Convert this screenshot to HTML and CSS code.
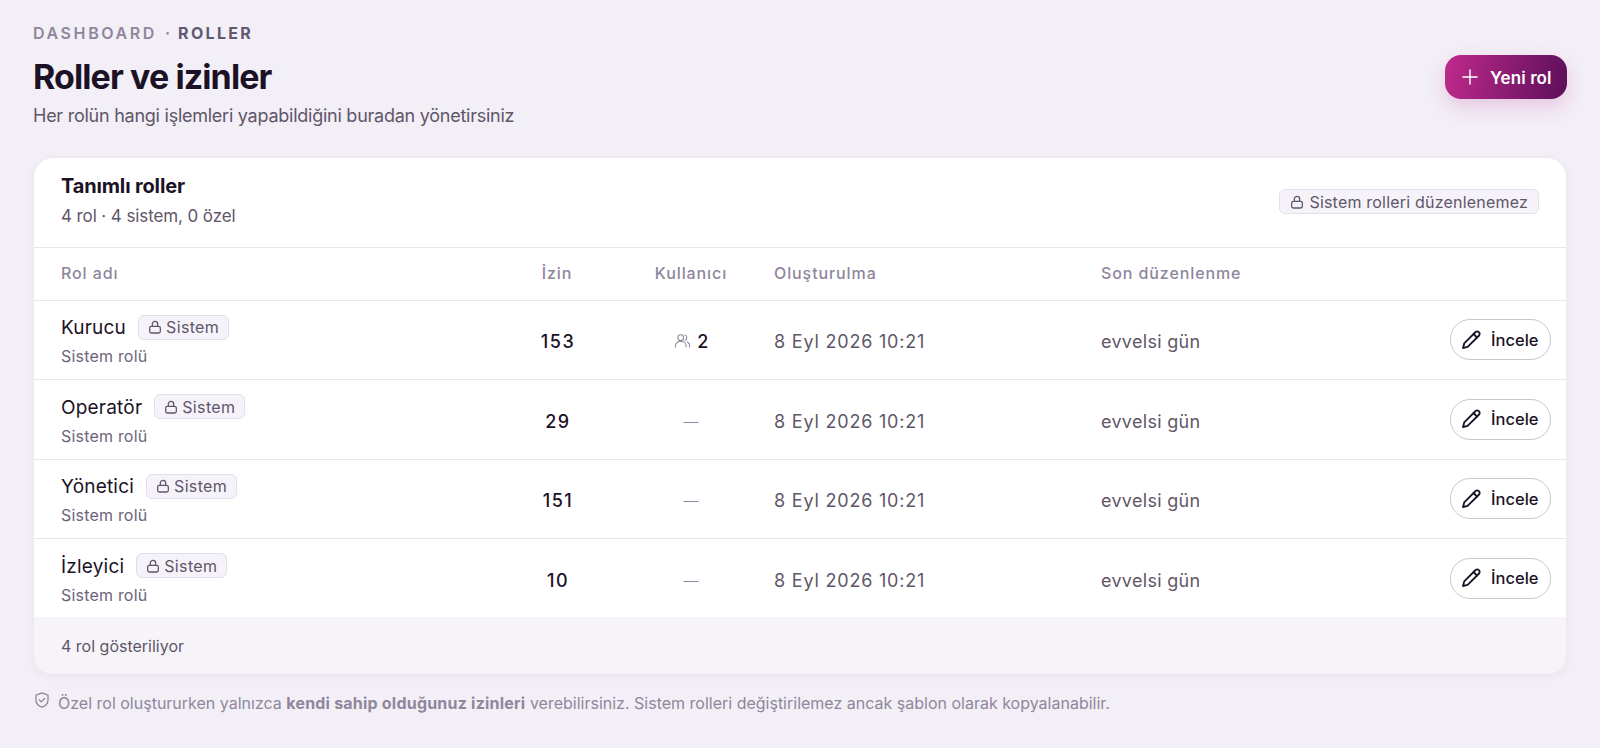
FILE: index.html
```html
<!DOCTYPE html>
<html lang="tr">
<head>
  <meta charset="UTF-8">
  <title>Roller ve izinler</title>
  <link rel="stylesheet" href="styles.css">
</head>
<body>

<svg class="sprite" width="0" height="0">
  <symbol id="i-lock" viewBox="0 0 24 24">
    <rect x="4" y="11" width="16" height="10" rx="2.5"/>
    <path d="M8 11V7.500a4 4 0 0 1 8 0V11"/>
  </symbol>
  <symbol id="i-pencil" viewBox="0 0 24 24">
    <path d="M4 20l1.200-4.600L16.600 4a2.500 2.500 0 0 1 3.500 3.500L8.600 18.900z"/>
    <path d="M14.500 6l3.500 3.500"/>
  </symbol>
</svg>

<main class="page">
  <div class="crumbs"><span>DASHBOARD</span><i>·</i><b>ROLLER</b></div>

  <header class="head">
    <div>
      <h1>Roller ve izinler</h1>
      <p class="sub">Her rolün hangi işlemleri yapabildiğini buradan yönetirsiniz</p>
    </div>
    <button class="btn-new">
      <svg viewBox="0 0 24 24"><path d="M12 3.500v17M3.500 12h17"/></svg>
      Yeni rol
    </button>
  </header>

  <section class="card">
    <div class="card-head">
      <div>
        <h2>Tanımlı roller</h2>
        <p class="count">4 rol · 4 sistem, 0 özel</p>
      </div>
      <span class="tag tag-wide"><svg class="lock"><use href="#i-lock"/></svg>Sistem rolleri düzenlenemez</span>
    </div>

    <table class="roles">
      <colgroup>
        <col class="c-name"><col class="c-perm"><col class="c-user"><col class="c-date"><col class="c-edit"><col>
      </colgroup>
      <thead>
        <tr>
          <th>Rol adı</th>
          <th class="mid">İzin</th>
          <th class="mid">Kullanıcı</th>
          <th>Oluşturulma</th>
          <th>Son düzenlenme</th>
          <th></th>
        </tr>
      </thead>
      <tbody>
        <tr>
          <td class="role">
            <div class="name">Kurucu <span class="tag"><svg class="lock"><use href="#i-lock"/></svg>Sistem</span></div>
            <div class="desc">Sistem rolü</div>
          </td>
          <td class="mid num">153</td>
          <td class="mid users">
            <svg class="people" viewBox="0 0 24 24"><circle cx="9.500" cy="8" r="4"/><path d="M2 21v-1.500a6 6 0 0 1 6-6h3a6 6 0 0 1 6 6V21"/><path d="M15.500 4.300a4 4 0 0 1 0 7.500M19 14a6 6 0 0 1 3 5.500V21"/></svg>
            2
          </td>
          <td class="soft date">8 Eyl 2026 10:21</td>
          <td class="soft">evvelsi gün</td>
          <td class="act"><button class="btn-view"><svg><use href="#i-pencil"/></svg>İncele</button></td>
        </tr>
        <tr>
          <td class="role">
            <div class="name">Operatör <span class="tag"><svg class="lock"><use href="#i-lock"/></svg>Sistem</span></div>
            <div class="desc">Sistem rolü</div>
          </td>
          <td class="mid num">29</td>
          <td class="mid dash">—</td>
          <td class="soft date">8 Eyl 2026 10:21</td>
          <td class="soft">evvelsi gün</td>
          <td class="act"><button class="btn-view"><svg><use href="#i-pencil"/></svg>İncele</button></td>
        </tr>
        <tr>
          <td class="role">
            <div class="name">Yönetici <span class="tag"><svg class="lock"><use href="#i-lock"/></svg>Sistem</span></div>
            <div class="desc">Sistem rolü</div>
          </td>
          <td class="mid num">151</td>
          <td class="mid dash">—</td>
          <td class="soft date">8 Eyl 2026 10:21</td>
          <td class="soft">evvelsi gün</td>
          <td class="act"><button class="btn-view"><svg><use href="#i-pencil"/></svg>İncele</button></td>
        </tr>
        <tr>
          <td class="role">
            <div class="name">İzleyici <span class="tag"><svg class="lock"><use href="#i-lock"/></svg>Sistem</span></div>
            <div class="desc">Sistem rolü</div>
          </td>
          <td class="mid num">10</td>
          <td class="mid dash">—</td>
          <td class="soft date">8 Eyl 2026 10:21</td>
          <td class="soft">evvelsi gün</td>
          <td class="act"><button class="btn-view"><svg><use href="#i-pencil"/></svg>İncele</button></td>
        </tr>
      </tbody>
    </table>

    <div class="card-foot">4 rol gösteriliyor</div>
  </section>

  <p class="note">
    <svg viewBox="0 0 24 24"><path d="M12 2.500l8 3v6c0 5-3.400 8.500-8 10-4.600-1.500-8-5-8-10v-6z"/><path d="M8.500 12l2.500 2.500 4.500-4.500"/></svg>
    <span>Özel rol oluştururken yalnızca <b>kendi sahip olduğunuz izinleri</b> verebilirsiniz. Sistem rolleri değiştirilemez ancak şablon olarak kopyalanabilir.</span>
  </p>
</main>

</body>
</html>
```

FILE: styles.css
```css
* {
  box-sizing: border-box;
}
body {
  margin: 0;
  height: 748px;
  overflow: hidden;
  font-family: Inter, 'Noto Sans', sans-serif;
  background: #f3eff6;
  color: #1c1226;
}
svg {
  fill: none;
  stroke: currentColor;
  stroke-linecap: round;
  stroke-linejoin: round;
}
.sprite {
  position: absolute;
}
.page {
  padding: 23px 33px 0;
}
.crumbs {
  display: flex;
  gap: 8px;
  font-size: 16px;
  line-height: 20px;
  font-weight: 600;
  letter-spacing: 2.6px;
  color: #8f869d;
}
.crumbs i {
  font-style: normal;
  letter-spacing: 0;
}
.crumbs b {
  font-weight: 700;
  letter-spacing: 2.3px;
  color: #625871;
}
.head {
  display: flex;
  justify-content: space-between;
  align-items: flex-start;
  margin-top: 12px;
}
h1 {
  margin: 0;
  font-size: 34px;
  line-height: 44px;
  font-weight: 700;
  letter-spacing: -0.9px;
}
.sub {
  margin: 5px 0 0;
  font-size: 18px;
  line-height: 24px;
  letter-spacing: -0.25px;
  color: #5f5669;
}
.btn-new {
  display: flex;
  align-items: center;
  gap: 10px;
  width: 122px;
  height: 44px;
  padding: 2px 14px 0 15px;
  border: none;
  border-radius: 16px;
  font: 600 17px Inter, sans-serif;
  letter-spacing: 0.1px;
  color: #fff;
  white-space: nowrap;
  background: linear-gradient(100deg, #bf2a8c, #5c0f5a);
  box-shadow: 0 8px 20px #b3288a33;
}
.btn-new svg {
  width: 20px;
  height: 20px;
  margin-top: -2px;
  stroke-width: 1.700;
}
.card {
  margin-top: 29px;
  background: #fff;
  border: 1px solid #ebe8f0;
  border-radius: 20px;
  overflow: hidden;
  box-shadow: 0 2px 8px #5a3f7a0d;
}
.card-head {
  display: flex;
  justify-content: space-between;
  align-items: center;
  height: 90px;
  padding: 0 27px;
  border-bottom: 1px solid #e8e5ed;
}
h2 {
  margin: 0;
  font-size: 20px;
  line-height: 26px;
  font-weight: 700;
  letter-spacing: -0.15px;
}
.card-head > div {
  margin-top: -4px;
}
.count {
  margin: 5px 0 0;
  font-size: 17px;
  line-height: 24px;
  letter-spacing: -0.1px;
  color: #5f5669;
}
.tag {
  display: inline-flex;
  align-items: center;
  gap: 3px;
  height: 25px;
  margin-top: -2px;
  padding: 0 9px 0 8px;
  font-size: 16px;
  font-weight: 400;
  letter-spacing: 0.35px;
  color: #5f5669;
  background: #f5f3f9;
  border: 1px solid #e3dfea;
  border-radius: 6px;
}
.tag-wide {
  gap: 4px;
  padding: 0 10px 0 9px;
  letter-spacing: 0.2px;
}
.lock {
  width: 16px;
  height: 16px;
  stroke-width: 1.900;
}
.roles {
  width: 100%;
  border-collapse: collapse;
  table-layout: fixed;
}
.c-name { width: 458px; }
.c-perm { width: 130px; }
.c-user { width: 138px; }
.c-date { width: 327px; }
.c-edit { width: 300px; }
th {
  height: 52px;
  padding: 0 14px 1px;
  text-align: left;
  font-size: 16px;
  font-weight: 500;
  color: #8f869d;
  letter-spacing: 0.9px;
  border-bottom: 1px solid #e8e5ed;
}
td {
  height: 79.500px;
  padding: 4px 14px 0;
  font-size: 18px;
  border-bottom: 1px solid #e8e5ed;
}
tbody tr:last-child td {
  height: 78.500px;
  border-bottom: none;
}
th:first-child, td:first-child {
  padding-left: 27px;
}
.mid {
  text-align: center;
}
td.role {
  padding-top: 3px;
}
.name {
  display: flex;
  align-items: center;
  gap: 12px;
  font-size: 19px;
  line-height: 26px;
  letter-spacing: 0.2px;
}
.desc {
  margin-top: 4px;
  font-size: 16px;
  line-height: 22px;
  letter-spacing: 0.2px;
  color: #6d6479;
}
td.num {
  padding-left: 16px;
  font-weight: 500;
  letter-spacing: 1.500px;
}
.users {
  font-weight: 500;
}
.people {
  width: 17px;
  height: 17px;
  margin-right: 2px;
  color: #8f869d;
  stroke-width: 1.500;
  vertical-align: -1px;
}
.dash {
  font-size: 15px;
  font-weight: 300;
  color: #8f869d;
}
.soft {
  color: #5f5669;
  letter-spacing: 0.3px;
}
.date {
  letter-spacing: 0.8px;
}
td.act {
  padding: 0 15px 0 0;
  text-align: right;
}
.btn-view {
  display: inline-flex;
  align-items: center;
  gap: 8px;
  width: 101px;
  height: 41px;
  padding: 0 0 0 8px;
  background: #fff;
  border: 1px solid #c9c5d1;
  border-radius: 20px;
  font: 500 16.500px Inter, sans-serif;
  color: #1c1226;
}
.btn-view svg {
  width: 24px;
  height: 24px;
  stroke-width: 1.800;
}
.card-foot {
  height: 57px;
  padding: 0 27px;
  font-size: 16px;
  line-height: 58px;
  color: #5f5669;
  background: #f6f4f9;
}
.note {
  display: flex;
  gap: 7px;
  margin: 16px 0 0;
  font-size: 16px;
  line-height: 24px;
  color: #8f869d;
}
.note svg {
  flex: none;
  width: 18px;
  height: 18px;
  stroke-width: 1.700;
}
.note b {
  font-weight: 700;
  letter-spacing: 0.21px;
}
```
